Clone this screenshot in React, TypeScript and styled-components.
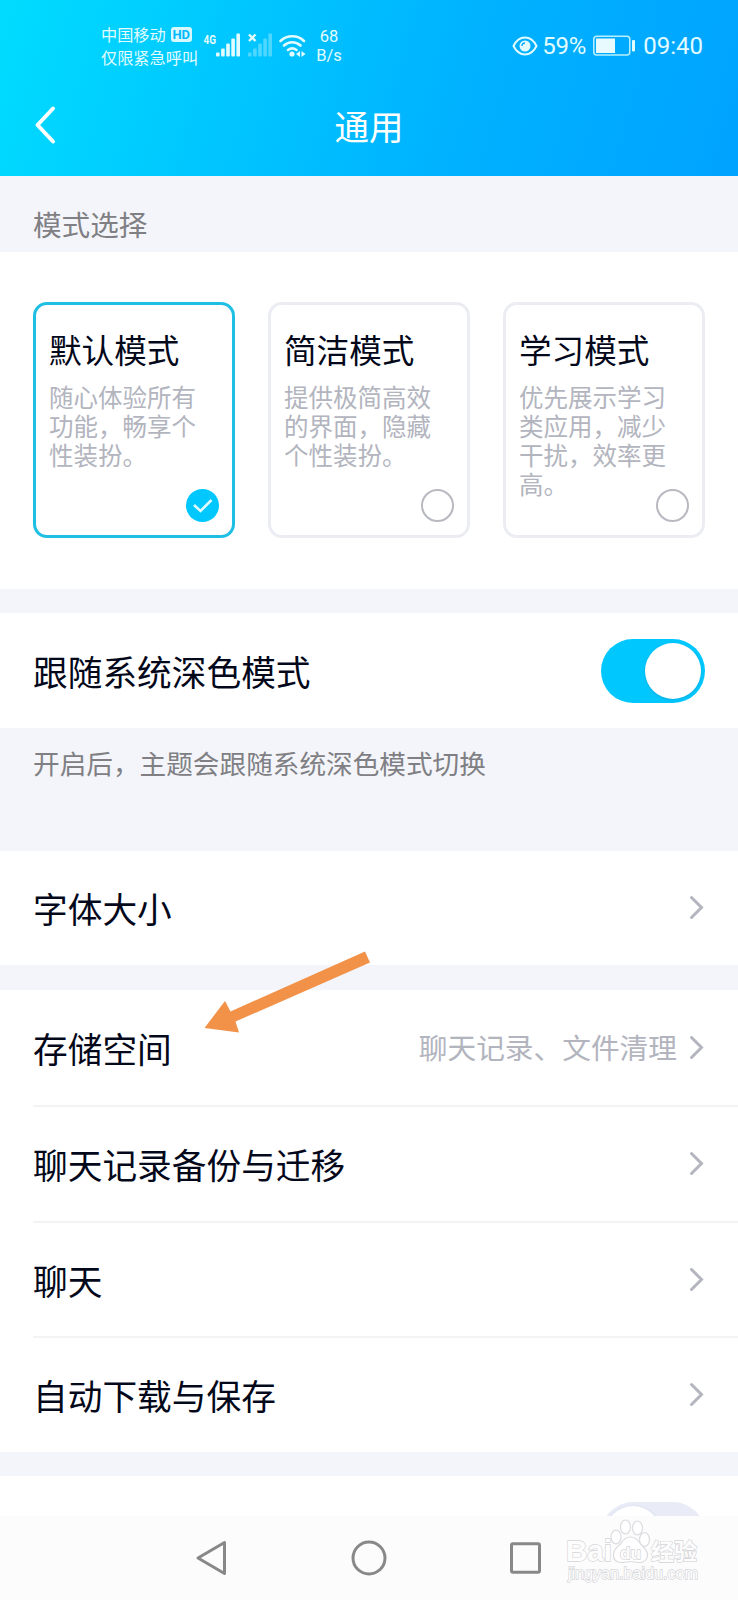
import React, { useState } from "react";
import styled, { createGlobalStyle } from "styled-components";

const GlobalStyle = createGlobalStyle`
  * { box-sizing: border-box; }
  body {
    margin: 0;
    background: #f4f5fa;
    font-family: "Noto Sans CJK SC", Roboto, sans-serif;
    color: #03081a;
  }
`;

const Screen = styled.div`
  position: relative;
  width: 738px;
  height: 1600px;
  display: flex;
  flex-direction: column;
  overflow: hidden;
  background: #f4f5fa;
`;

const Header = styled.header`
  height: 176px;
  flex: none;
  color: #fff;
  background: linear-gradient(106deg, #00dcff 0%, #00c6ff 32%, #00b2ff 62%, #00a3ff 100%);
`;

const StatusBar = styled.div`
  height: 92px;
  padding: 0 35px 0 101px;
  display: flex;
  align-items: center;
  color: #e2fbff;
`;

const Carrier = styled.div`
  width: 102px;
  font-size: 16.2px;
  line-height: 23px;
  white-space: nowrap;
`;

const CarrierLine = styled.div`
  display: flex;
  align-items: center;
  gap: 5px;
`;

const HdBadge = styled.span`
  width: 21px;
  height: 15px;
  border-radius: 3px;
  background: #d8f8ff;
  color: #00b8ff;
  font: 700 13px/15px Roboto, sans-serif;
  text-align: center;
`;

const StatusIcons = styled.svg`
  display: block;
  flex: none;
`;

const NetSpeed = styled.div`
  width: 32px;
  margin-left: 7px;
  font: 400 16.5px/19px Roboto, sans-serif;
  text-align: center;
`;

const StatusRight = styled.div`
  margin-left: auto;
  display: flex;
  align-items: center;
  font: 400 24px/28px Roboto, sans-serif;
`;

const Percent = styled.span`
  margin: 0 7px 0 4px;
  letter-spacing: -0.2px;
`;

const Clock = styled.span`
  margin-left: 7px;
`;

const TitleBar = styled.div`
  display: grid;
  grid-template-columns: 80px 1fr 80px;
  align-items: center;
  height: 66px;
`;

const BackButton = styled.button`
  border: 0;
  padding: 0 0 0 34px;
  background: none;
  display: flex;
`;

const Title = styled.h1`
  margin: 0;
  font-size: 34.5px;
  line-height: 44px;
  font-weight: 400;
  text-align: center;
`;

const Body = styled.main`
  height: 1340px;
  flex: none;
  overflow: hidden;
`;

const SectionLabel = styled.div`
  height: 76px;
  padding: 28px 33px 0;
  font-size: 28.6px;
  line-height: 40px;
  color: #808084;
`;

const ModePanel = styled.section`
  height: 337px;
  padding: 50px 33px 0;
  display: flex;
  justify-content: space-between;
  align-items: flex-start;
  background: #fff;
`;

const Card = styled.div<{ $active: boolean }>`
  position: relative;
  width: 202px;
  height: 236px;
  padding: 22px 18px 0 13px;
  border: 3.5px solid ${(p) => (p.$active ? "#1fbfe3" : "#ebedf3")};
  border-radius: 14px;
  cursor: pointer;
`;

const CardTitle = styled.div`
  font-size: 32.6px;
  line-height: 44px;
  white-space: nowrap;
`;

const CardText = styled.div`
  margin-top: 12px;
  font-size: 24.5px;
  line-height: 28.9px;
  color: #b2b4be;
`;

const Radio = styled.span<{ $active: boolean }>`
  position: absolute;
  right: 13px;
  bottom: 13px;
  width: 33px;
  height: 33px;
  border-radius: 50%;
  border: ${(p) => (p.$active ? "0" : "2px solid #b8b9c1")};
  background: ${(p) => (p.$active ? "#00c8ff" : "#fff")};
`;

const Group = styled.section<{ $gap: number }>`
  margin-top: ${(p) => p.$gap}px;
  background: #fff;
`;

const Row = styled.div<{ $height: number }>`
  height: ${(p) => p.$height}px;
  padding-right: 33px;
  margin-left: 33px;
  display: flex;
  align-items: center;

  & + & {
    border-top: 2px solid #f1f3f5;
  }
`;

const RowLabel = styled.span`
  flex: 1;
  font-size: 34.7px;
  line-height: 48px;
  white-space: nowrap;
`;

const RowValue = styled.span`
  margin: -2px 12px 0 0;
  font-size: 28.7px;
  line-height: 40px;
  color: #b2b4be;
`;

const Note = styled.p`
  margin: 0;
  height: 123px;
  padding: 15px 33px 0;
  font-size: 26.65px;
  line-height: 40px;
  color: #808084;
`;

const Track = styled.button<{ $on: boolean }>`
  width: 104px;
  height: 64px;
  flex: none;
  padding: 4px;
  border: 0;
  border-radius: 32px;
  display: flex;
  justify-content: ${(p) => (p.$on ? "flex-end" : "flex-start")};
  background: ${(p) => (p.$on ? "#00c8ff" : "#e9ecf6")};
`;

const Knob = styled.span`
  width: 56px;
  height: 56px;
  border-radius: 50%;
  background: #fff;
  box-shadow: 0 1px 3px rgba(60, 90, 130, 0.25);
`;

const NavBar = styled.nav`
  height: 84px;
  flex: none;
  padding: 0 197px 0 195px;
  display: flex;
  align-items: center;
  justify-content: space-between;
  background: #fcfcfc;
`;

const Pointer = styled.svg`
  position: absolute;
  left: 200px;
  top: 948px;
  pointer-events: none;
`;

const Watermark = styled.svg`
  position: absolute;
  left: 560px;
  top: 1514px;
  pointer-events: none;
`;

const Chevron = () => (
  <svg width="16" height="26" viewBox="0 0 16 26" fill="none">
    <path d="M2.500 2.500 12.500 12.500 2.500 22.500" stroke="#b3b5bf" strokeWidth="3" strokeLinecap="round" />
  </svg>
);

const SignalBars = ({ x, opacity }: { x: number; opacity: number }) => (
  <g fill="#e2fbff" opacity={opacity}>
    {[4, 8, 13, 18, 23].map((h, i) => (
      <rect key={h} x={x + i * 5.1} y={25.5 - h} width="3.600" height={h} rx="1" />
    ))}
  </g>
);

const Connectivity = () => (
  <StatusIcons width="103" height="30" viewBox="0 0 103 30">
    <text x="0.500" y="12.500" fontFamily="Roboto" fontSize="13.500" fontWeight="700" fill="#e2fbff" textLength="12.500" lengthAdjust="spacingAndGlyphs">4G</text>
    <SignalBars x={13} opacity={1} />
    <SignalBars x={45} opacity={0.35} />
    <path d="m46 3.500 6.500 6.500m0-6.500-6.500 6.500" stroke="#e2fbff" strokeWidth="2.400" />
    <g fill="none" stroke="#e2fbff" strokeWidth="2.600" strokeLinecap="round">
      <path d="M77.500 10a17 17 0 0 1 23.500 0" />
      <path d="M81 14.500a12 12 0 0 1 16.500 0" />
      <path d="M85 19a7 7 0 0 1 8.500 0" />
    </g>
    <circle cx="89" cy="23" r="2.600" fill="#e2fbff" />
    <path d="m93 23 4-3v6zM102.500 23l-4-3v6z" fill="#e2fbff" />
  </StatusIcons>
);

const Eye = () => (
  <StatusIcons width="26" height="22" viewBox="0 0 26 22" fill="none">
    <path d="M1.500 11C7 -0.300 19 -0.300 24.500 11 19 22.300 7 22.300 1.500 11Z" stroke="#e2fbff" strokeWidth="2" />
    <circle cx="13" cy="11" r="5.500" fill="#e2fbff" />
    <path d="M10 11a3 3 0 0 1 3-3" stroke="#00a8ff" strokeWidth="1.300" />
  </StatusIcons>
);

const Battery = () => (
  <StatusIcons width="43" height="22" viewBox="0 0 43 22">
    <rect x="0.800" y="1.300" width="36" height="18.800" rx="3" fill="none" stroke="#b8efff" strokeWidth="1.500" />
    <rect x="3" y="3.500" width="19" height="14.500" fill="#e9faff" />
    <rect x="39" y="5" width="3" height="11.500" rx="1" fill="#e2fbff" />
  </StatusIcons>
);

const modes = [
  { name: "默认模式", text: "随心体验所有功能，畅享个性装扮。" },
  { name: "简洁模式", text: "提供极简高效的界面，隐藏个性装扮。" },
  { name: "学习模式", text: "优先展示学习类应用，减少干扰，效率更高。" },
];

const storageRows = [
  { label: "存储空间", value: "聊天记录、文件清理", height: 115 },
  { label: "聊天记录备份与迁移", height: 116 },
  { label: "聊天", height: 115 },
  { label: "自动下载与保存", height: 116 },
];

export default function App() {
  const [mode, setMode] = useState(0);
  const [dark, setDark] = useState(true);
  const [extra, setExtra] = useState(false);

  return (
    <Screen>
      <GlobalStyle />
      <Header>
        <StatusBar>
          <Carrier>
            <CarrierLine>中国移动<HdBadge>HD</HdBadge></CarrierLine>
            <CarrierLine>仅限紧急呼叫</CarrierLine>
          </Carrier>
          <Connectivity />
          <NetSpeed>68<br />B/s</NetSpeed>
          <StatusRight>
            <Eye />
            <Percent>59%</Percent>
            <Battery />
            <Clock>09:40</Clock>
          </StatusRight>
        </StatusBar>
        <TitleBar>
          <BackButton aria-label="返回">
            <svg width="24" height="40" viewBox="0 0 24 40" fill="none">
              <path d="M19 3.500 3.500 20 19 36.500" stroke="#fff" strokeWidth="4" strokeLinecap="round" strokeLinejoin="round" />
            </svg>
          </BackButton>
          <Title>通用</Title>
        </TitleBar>
      </Header>

      <Body>
        <SectionLabel>模式选择</SectionLabel>
        <ModePanel>
          {modes.map((m, i) => (
            <Card key={m.name} $active={mode === i} onClick={() => setMode(i)}>
              <CardTitle>{m.name}</CardTitle>
              <CardText>{m.text}</CardText>
              <Radio $active={mode === i}>
                {mode === i && (
                  <svg width="33" height="33" viewBox="0 0 33 33" fill="none">
                    <path d="m8 16 6.500 6L25.500 11" stroke="#e0f9ff" strokeWidth="2.600" />
                  </svg>
                )}
              </Radio>
            </Card>
          ))}
        </ModePanel>

        <Group $gap={24}>
          <Row $height={115}>
            <RowLabel>跟随系统深色模式</RowLabel>
            <Track $on={dark} onClick={() => setDark(!dark)}><Knob /></Track>
          </Row>
        </Group>
        <Note>开启后，主题会跟随系统深色模式切换</Note>

        <Group $gap={0}>
          <Row $height={114}>
            <RowLabel>字体大小</RowLabel>
            <Chevron />
          </Row>
        </Group>

        <Group $gap={25}>
          {storageRows.map((r) => (
            <Row key={r.label} $height={r.height}>
              <RowLabel>{r.label}</RowLabel>
              {r.value && <RowValue>{r.value}</RowValue>}
              <Chevron />
            </Row>
          ))}
        </Group>

        <Group $gap={24}>
          <Row $height={115}>
            <RowLabel />
            <Track $on={extra} onClick={() => setExtra(!extra)}><Knob /></Track>
          </Row>
        </Group>
      </Body>

      <NavBar>
        <svg width="32" height="38" viewBox="0 0 32 38" fill="none">
          <path d="M29.500 3.500v31L3 19Z" stroke="#888" strokeWidth="3" strokeLinejoin="round" />
        </svg>
        <svg width="36" height="36" viewBox="0 0 36 36" fill="none">
          <circle cx="18" cy="18" r="16" stroke="#888" strokeWidth="3" />
        </svg>
        <svg width="31" height="32" viewBox="0 0 31 32" fill="none">
          <rect x="1.500" y="1.800" width="28" height="28.400" rx="1.500" stroke="#888" strokeWidth="3" />
        </svg>
      </NavBar>

      <Pointer width="175" height="90" viewBox="200 948 175 90">
        <path d="m204.500 1028 20.500-27 5.500 10.500L365 951.500l5 11-134.500 59 3.500 11Z" fill="#f29148" />
      </Pointer>

      <Watermark width="150" height="72" viewBox="0 0 150 72">
        <g fill="#fff" stroke="#dcdce0" strokeWidth="1.200">
          <ellipse cx="56" cy="23" rx="5" ry="6.800" />
          <ellipse cx="65.500" cy="13" rx="5" ry="7" />
          <ellipse cx="77.500" cy="14" rx="5" ry="7" />
          <ellipse cx="84.500" cy="25.500" rx="5" ry="7" />
          <path d="M70.500 23c-6 0-8 4-10 7-4 3-7 6-7 11 0 5 3 7.500 8 7.500 3 0 6-1 9-1s6 1 9 1c5 0 8-3 8-7.500 0-5-4-8-7-11-2-3-4-7-10-7Z" />
        </g>
        <g fill="#fdfdfd" stroke="#d4d4d8" strokeWidth="1.300" paintOrder="stroke" fontFamily="Liberation Sans" fontWeight="700">
          <text x="6" y="47" fontSize="30" textLength="46" lengthAdjust="spacingAndGlyphs">Bai</text>
          <text x="60" y="45" fontSize="17" textLength="21" lengthAdjust="spacingAndGlyphs">du</text>
          <text x="91" y="46" fontSize="23" textLength="46" lengthAdjust="spacingAndGlyphs" fontFamily="Noto Sans CJK SC">经验</text>
          <text x="8" y="65" fontSize="16" fontWeight="400" textLength="130" lengthAdjust="spacingAndGlyphs">jingyan.baidu.com</text>
        </g>
      </Watermark>
    </Screen>
  );
}
